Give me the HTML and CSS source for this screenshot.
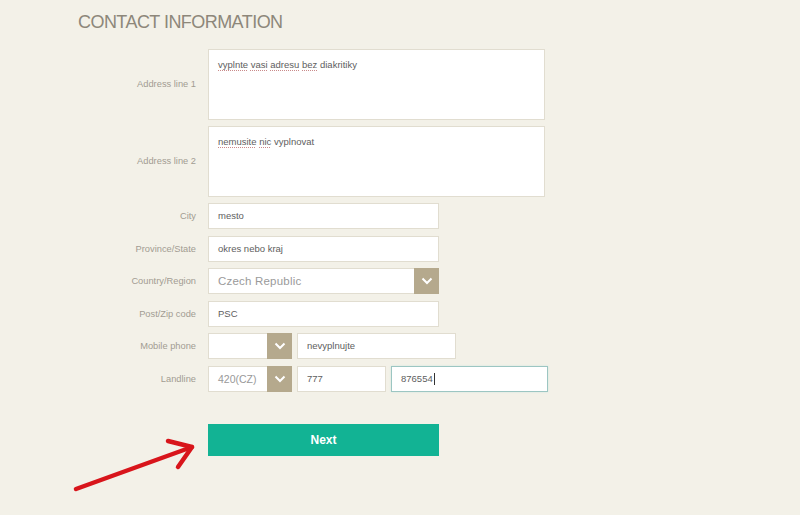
FILE: index.html
```html
<!DOCTYPE html>
<html lang="en">
<head>
<meta charset="utf-8">
<title>Contact information</title>
<link rel="stylesheet" href="styles.css">
</head>
<body>
<div class="page">
  <h1 class="title">CONTACT INFORMATION</h1>
  <div class="form">
    <div class="label">Address line 1</div>
    <div class="field textarea"><span class="spell">vyplnte</span> <span class="spell">vasi</span> <span class="spell">adresu</span> <span class="spell">bez</span> diakritiky</div>

    <div class="label">Address line 2</div>
    <div class="field textarea"><span class="spell">nemusite</span> <span class="spell">nic</span> vyplnovat</div>

    <div class="label">City</div>
    <div class="field input w230">mesto</div>

    <div class="label">Province/State</div>
    <div class="field input w230">okres nebo kraj</div>

    <div class="label">Country/Region</div>
    <div class="select w230"><span class="sel-text big">Czech Republic</span><span class="arrow"><svg width="12" height="8" viewBox="0 0 12 8"><polyline points="1.5,1.5 6,6 10.5,1.5" fill="none" stroke="#fff" stroke-width="2"/></svg></span></div>

    <div class="label">Post/Zip code</div>
    <div class="field input w230">PSC</div>

    <div class="label">Mobile phone</div>
    <div class="multi">
      <div class="select w84"><span class="sel-text"></span><span class="arrow"><svg width="12" height="8" viewBox="0 0 12 8"><polyline points="1.5,1.5 6,6 10.5,1.5" fill="none" stroke="#fff" stroke-width="2"/></svg></span></div>
      <div class="field input w158">nevyplnujte</div>
    </div>

    <div class="label">Landline</div>
    <div class="multi">
      <div class="select w84"><span class="sel-text grey">420(CZ)</span><span class="arrow"><svg width="12" height="8" viewBox="0 0 12 8"><polyline points="1.5,1.5 6,6 10.5,1.5" fill="none" stroke="#fff" stroke-width="2"/></svg></span></div>
      <div class="field input w88">777</div>
      <div class="field input w157 focus">876554<span class="caret"></span></div>
    </div>

    <div class="label"></div>
    <button class="next">Next</button>
  </div>
</div>
<svg class="annot" width="800" height="515" viewBox="0 0 800 515">
  <g fill="none" stroke="#d8151b" stroke-width="4.5" stroke-linecap="round" stroke-linejoin="round">
    <line x1="76" y1="489" x2="192" y2="447"/>
    <polyline points="168,441 192,447 178,467"/>
  </g>
</svg>
</body>
</html>
```
FILE: styles.css
```css
html, body {
  margin: 0;
  padding: 0;
}
body {
  background: #f3f1e8;
  font-family: "Liberation Sans", Arial, sans-serif;
  width: 800px;
  height: 515px;
  overflow: hidden;
  position: relative;
}
.page {
  padding: 11px 0 0 78px;
}
.title {
  margin: 0;
  font-weight: normal;
  font-size: 18px;
  letter-spacing: -0.55px;
  color: #8d877a;
  line-height: 22px;
}
.form {
  margin-top: 16px;
  margin-left: -78px;
  display: grid;
  grid-template-columns: 196px auto;
  column-gap: 12px;
  row-gap: 6.5px;
  align-items: center;
}
.label {
  text-align: right;
  font-size: 9.3px;
  color: #a29c92;
}
.field {
  box-sizing: border-box;
  background: #fff;
  border: 1px solid #e1ddd0;
  font-size: 9.5px;
  color: #5e5e5e;
  padding-left: 9px;
}
.textarea {
  width: 337px;
  height: 70.5px;
  padding-top: 9px;
  line-height: 12px;
}
.spell {
  text-decoration: underline dotted #c98a8a;
  text-decoration-thickness: 1px;
  text-underline-offset: 2px;
}
.input {
  height: 26px;
  line-height: 24px;
}
.w230 { width: 231px; }
.w158 { width: 159px; }
.w88 { width: 89px; }
.w157 { width: 157px; }
.w84 { width: 84px; }
.multi {
  display: flex;
  gap: 5px;
}
.select {
  box-sizing: border-box;
  height: 26px;
  display: flex;
  background: #fff;
  border: 1px solid #e1ddd0;
}
.sel-text {
  flex: 1;
  padding-left: 9px;
  line-height: 24px;
  font-size: 10px;
  color: #9a9a9a;
}
.sel-text.big {
  font-size: 11.5px;
  letter-spacing: 0.2px;
}
.sel-text.grey {
  font-size: 10.5px;
  color: #999;
}
.arrow {
  width: 25px;
  margin: -1px -1px -1px 0;
  background: #b5a98d;
  display: flex;
  align-items: center;
  justify-content: center;
}
.focus {
  border-color: #9cc6c2;
  box-shadow: 0 0 2px #cfe6e3;
}
.caret {
  display: inline-block;
  width: 1px;
  height: 12px;
  background: #333;
  vertical-align: middle;
  margin-left: 1px;
}
.next {
  margin-top: 25.5px;
  width: 231px;
  height: 32px;
  border: none;
  background: #12b394;
  color: #fff;
  font-family: "Liberation Sans", Arial, sans-serif;
  font-weight: bold;
  font-size: 12px;
  padding: 0;
}
.annot {
  position: absolute;
  left: 0;
  top: 0;
  pointer-events: none;
}
```
